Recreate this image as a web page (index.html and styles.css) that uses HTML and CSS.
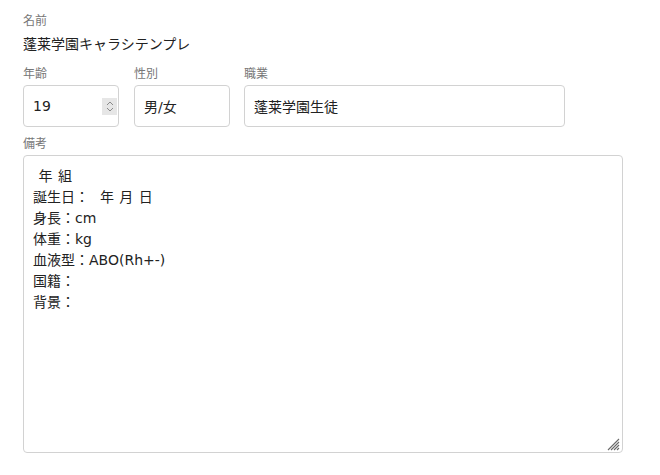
FILE: index.html
```html
<!DOCTYPE html>
<html lang="ja">

<head>
  <meta charset="UTF-8">
  <meta name="viewport" content="width=device-width, initial-scale=1.0">
  <title>キャラシ</title>
  <link rel="stylesheet" href="styles.css">
</head>

<body>
  <div class="sheet">
    <div class="field">
      <label class="label">名前</label>
      <div class="value">蓬莱学園キャラシテンプレ</div>
    </div>

    <div class="row">
      <div class="field age">
        <label class="label">年齢</label>
        <div class="box number">
          <input class="input" type="text" value="19">
          <span class="spin">
            <svg width="8" height="13" viewBox="0 0 8 13">
              <path d="M1 5 L4 2 L7 5" fill="none" stroke="#8a8a8a" stroke-width="1" />
              <path d="M1 8 L4 11 L7 8" fill="none" stroke="#8a8a8a" stroke-width="1" />
            </svg>
          </span>
        </div>
      </div>
      <div class="field sex">
        <label class="label">性別</label>
        <div class="box">
          <input class="input" type="text" value="男/女">
        </div>
      </div>
      <div class="field job">
        <label class="label">職業</label>
        <div class="box">
          <input class="input" type="text" value="蓬莱学園生徒">
        </div>
      </div>
    </div>

    <div class="field memo">
      <label class="label">備考</label>
      <div class="area-wrap">
        <textarea class="area"> 年 組
誕生日：  年 月 日
身長：cm
体重：kg
血液型：ABO(Rh+-)
国籍：
背景：</textarea>
        <!-- resize grip -->
        <svg class="grip" width="13" height="13" viewBox="0 0 13 13">
          <path d="M12 1 L1 12 M12 4 L4 12 M12 7 L7 12 M12 10 L10 12" stroke="#6a6a6a" stroke-width="1.1" />
        </svg>
      </div>
    </div>
  </div>
</body>

</html>
```

FILE: styles.css
```css
* {
  padding: 0;
  margin: 0;
  box-sizing: border-box;
}

body {
  background: #fff;
  font-family: "DejaVu Sans", "Noto Sans CJK JP", sans-serif;
  color: #222;
}

.sheet {
  padding: 12px 0 0 23px;
  width: 623px;
}

.label {
  display: block;
  font-size: 12px;
  line-height: 18px;
  color: #777;
}

.value {
  margin-top: 4px;
  font-size: 14px;
  line-height: 20px;
}

.row {
  display: flex;
  margin-top: 11px;
}

.age {
  width: 96px;
}

.sex {
  width: 96px;
  margin-left: 15px;
}

.job {
  width: 321px;
  margin-left: 14px;
}

.box {
  margin-top: 2px;
  height: 42px;
  border: solid 1px #d2d2d2;
  border-radius: 4px;
  display: flex;
  align-items: center;
  background: #fff;
}

.input {
  flex: 1;
  min-width: 0;
  border: none;
  outline: none;
  background: transparent;
  font-family: inherit;
  font-size: 14px;
  color: #222;
  padding-left: 9px;
}

.spin {
  width: 15px;
  height: 17px;
  margin-right: 1px;
  background: #e6e6e6;
  display: flex;
  justify-content: center;
  align-items: center;
}

.memo {
  margin-top: 8px;
}

.area-wrap {
  position: relative;
  margin-top: 2px;
}

.area {
  display: block;
  width: 600px;
  height: 298px;
  border: solid 1px #d2d2d2;
  border-radius: 4px;
  padding: 10px 9px;
  font-family: inherit;
  font-size: 14px;
  line-height: 21px;
  word-spacing: 1px;
  color: #222;
  resize: none;
  outline: none;
}

.grip {
  position: absolute;
  right: 3px;
  bottom: 2px;
}
```
